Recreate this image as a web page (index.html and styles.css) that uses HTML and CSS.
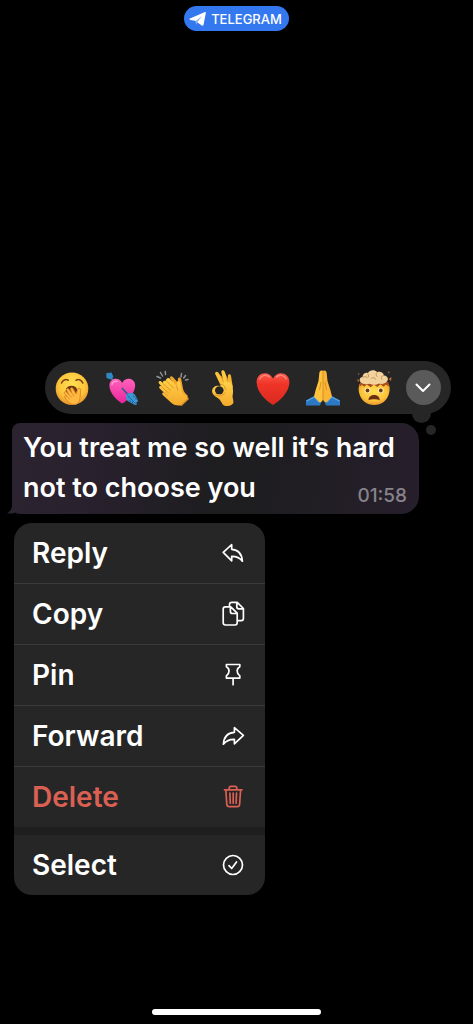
FILE: index.html
```html
<!DOCTYPE html>
<html lang="en">
<head>
  <meta charset="UTF-8">
  <meta name="viewport" content="width=device-width, initial-scale=1.0">
  <title>Telegram</title>

  <link rel="stylesheet" href="styles.css">
</head>
<body>
  <header class="top">
    <a class="app-pill" href="#">
      <svg width="18" height="16" viewBox="0 0 18 16"><path d="M1 7.600 15.400 1.200c.9-.4 1.600.1 1.400 1.100l-2.300 11.500c-.2 1-.9 1.300-1.700.8L6 9.800 1.300 8.900C.3 8.700.2 8 1 7.600z" fill="#fff"/><path d="M6.500 10l6.600-5-4.600 5.900-1.300 3z" fill="#8fb6f8"/></svg>
      <span>TELEGRAM</span>
    </a>
  </header>

  <main class="overlay">
    <div class="reactions">
      <button type="button" class="emoji" aria-label="Yawning face">
        <svg viewBox="0 0 36 36">
          <defs>
            <radialGradient id="face" cx="50%" cy="38%" r="62%"><stop offset="0" stop-color="#ffdf55"/><stop offset=".65" stop-color="#fdc63b"/><stop offset="1" stop-color="#e9962c"/></radialGradient>
            <linearGradient id="skin" x1="0" y1="0" x2="0" y2="1"><stop offset="0" stop-color="#ffd24a"/><stop offset="1" stop-color="#f4a92b"/></linearGradient>
          </defs>
          <circle cx="18" cy="18.700" r="16.300" fill="url(#face)"/>
          <path d="M7.500 13c1-3 4-4.300 6.800-2.800M22 10.200c2.800-1.500 5.800-.2 6.800 2.800" fill="none" stroke="#7a4714" stroke-width="1.600" stroke-linecap="round"/>
          <ellipse cx="17.500" cy="20.500" rx="5.700" ry="4.800" fill="#6d3a11"/>
          <path d="M13 30.500l-2-2.500c-1.300-1.900.5-3 1.800-1.600L10.700 24c-1.300-2 .6-3.300 2-1.800l2.200 2.300-2.200-3.700c-1-2 1.100-3.100 2.400-1.400l2.700 3.500-1.200-3.300c-.6-2 1.500-2.700 2.500-.9l3 5.300 1.400-4.500c.9-2.300 3.500-1.500 3.200.8l-.7 8c-.2 3.500-2.200 6-5.700 6.200-3.200.1-5.300-1.600-7.300-4z" fill="#ffb840" stroke="#d67c26" stroke-width=".8"/>
          <path d="M12.800 26.400l2.700 2.600M14.900 24.500l2.600 2.800M17.800 22.900l2 3" stroke="#d67c26" stroke-width=".7" stroke-linecap="round"/>
        </svg>
      </button>
      <button type="button" class="emoji" aria-label="Heart with arrow">
        <svg viewBox="0 0 36 36">
          <defs>
            <linearGradient id="pink" x1="0" y1="0" x2="0" y2="1"><stop offset="0" stop-color="#ff64bb"/><stop offset="1" stop-color="#ea239c"/></linearGradient>
          </defs>
          <path d="M6 7l5 5" stroke="#3a8fc4" stroke-width="1.600"/>
          <path d="M2.200 3.200 7.500 2.400l2 4.600L6.500 9.500 2.500 8z" fill="#2f88c1"/>
          <path d="M18.300 33.500C13 30.500 5.400 23 5.400 15.500c0-7.500 9.600-9.300 12.800-2.600 3.200-6.700 13-4.900 13 2.600 0 7.500-7.600 15-12.900 18z" fill="url(#pink)"/>
          <path d="M8 14.500c.3-2.700 3-4 5-3" fill="none" stroke="#ff9bd5" stroke-width="1.500" stroke-linecap="round"/>
          <path d="M18 18l9 10" stroke="#245f96" stroke-width="1.600"/>
          <path d="M22.500 24.500c-1.500 3.500.2 6.500 3 7.500l5 2.800c1.800.8 2.800-.2 2-2l-.4-.7c1.500.2 2.300-.8 1.500-2.300l-2.300-4.500c-1.500-2.700-5-3.500-8.800-.8z" fill="#3b96d2"/>
          <path d="M23.500 25.500l9 9M25.500 30l1 2M28 31.500l1 2M29 26l2.500 1M31 28.500l2 1" stroke="#1f6097" stroke-width=".9"/>
        </svg>
      </button>
      <button type="button" class="emoji" aria-label="Clapping hands">
        <svg viewBox="0 0 36 36">
          <path d="M2 6.500l3.500 1.500M5.500 2.500l2 3.500M10.300 1.500l.2 3M26.500 3.500L26 7M30.500 5.500L28.700 8M33 9.500L30.600 10" stroke="#8f9498" stroke-width="1.500" stroke-linecap="round"/>
          <path d="M17 11l-1.800-2.700c-.8-1.800 1.300-2.700 2.600-1.300l5 5.500.1-3.500c.2-2 2.800-2.300 3.300 0l1.600 8.500c.4 2.500 1.200 4.500 3.200 6.500l2 2-6 7.500z" fill="#f4a62c"/>
          <path d="M11.500 9c1-1.300 2.500-1.100 3.700.1l6.500 7 .3-3.600c.4-2 2.800-2 3.200.1l1.200 7c.4 2.400 1.300 4 3 5.500l4.100 3-7.500 7.200c-3 .5-6.500.2-9.500-2.300l-8.700-8c-1.500-1.600.1-3 1.300-2.200L4.700 18.500c-1.400-1.500.2-3.400 1.700-2.200L4 13.500c-1.200-1.700.6-3.300 2.200-2l2 1.800c-1-1.600.8-3.200 2.300-2.200z" fill="url(#skin)"/>
          <path d="M8 13.500l7.500 7M6.400 16.300l7 6.800M9 22.500l3.500 3.200M11.500 11l7 7M21.700 16l1 4" fill="none" stroke="#d98a23" stroke-width=".8" stroke-linecap="round"/>
          <path d="M33.500 28.500l-7.500 7.200" stroke="#e7952a" stroke-width="1.200"/>
        </svg>
      </button>
      <button type="button" class="emoji" aria-label="OK hand">
        <svg viewBox="0 0 36 36">
          <path d="M15.500 15L10.200 4.100C9.500 2 11.800.8 13.200 2.400l8 10.600z" fill="#ffc23b"/>
          <path d="M18.500 13L16.300 2c-.1-2.200 2.700-2.400 3.400-.2l4.800 12.200z" fill="#ffca40"/>
          <path d="M22.500 15l.4-9.200c.3-2 2.900-1.900 3.100.1L28 18z" fill="#f7b433"/>
          <path d="M20.500 12.300c2.500-1.600 6.200 0 7 4.200.6 3.500.8 5.500.2 8.500-.6 2.700.9 4.700.7 7.500-.5 3.500-8.200 5-10.700 2-1.100-1.600-2-4.300-4.600-6.200-3.500-1.900-6.500-4.700-6-8 .5-3.500 4-5.300 7.500-4.300z" fill="url(#skin)"/>
          <ellipse cx="14.300" cy="20.300" rx="4.300" ry="4" fill="#262626"/>
          <path d="M10 24.500c3 2.500 8 1.800 10-2M17.500 14.500c2 1.200 3 3.200 2.900 5.500" fill="none" stroke="#dc8d22" stroke-width=".9"/>
          <path d="M18.500 12L16 6M22.500 12l-.8-5" stroke="#dc8d22" stroke-width=".8"/>
        </svg>
      </button>
      <button type="button" class="emoji" aria-label="Red heart">
        <svg viewBox="0 0 36 36">
          <defs>
            <linearGradient id="red" x1="0" y1="0" x2="0" y2="1"><stop offset="0" stop-color="#fa5a4c"/><stop offset=".35" stop-color="#ef3427"/><stop offset="1" stop-color="#d92a20"/></linearGradient>
          </defs>
          <path d="M18 35C11.500 31.500 1.600 22 1.600 12.300 1.600 2 14 .3 18 8.500 22 .3 34.400 2 34.400 12.300 34.400 22 24.500 31.500 18 35z" fill="url(#red)"/>
          <path d="M4.800 9c1.700-4 6.700-5 9.700-2M21.500 7c3-3 8-2 9.700 2" fill="none" stroke="#ff9a8d" stroke-width="1.500" stroke-linecap="round" opacity=".75"/>
        </svg>
      </button>
      <button type="button" class="emoji" aria-label="Folded hands">
        <svg viewBox="0 0 36 36">
          <path d="M1 35.500V30.500l9-5 6.500 6-1.500 4z" fill="#2c78c4"/>
          <path d="M35 35.500V30.500l-9-5-6.500 6 1.500 4z" fill="#2c78c4"/>
          <path d="M1.500 31l8-4 4.500 5M34.500 31l-8-4-4.500 5" fill="none" stroke="#5aa5e2" stroke-width="1.200"/>
          <path d="M18 1c-2-1.300-3.600.3-3.700 2.300l-.8 7.700-3 9.500-1.500 6 5.700 6c2-.3 3.300-2 3.300-4z" fill="#ffc43c"/>
          <path d="M18 1c2-1.300 3.600.3 3.700 2.300l.8 7.700 3 9.500 1.500 6-5.700 6c-2-.3-3.300-2-3.300-4z" fill="#fbb535"/>
          <path d="M18 1.500V29M14.500 20l1.500-8M21.500 20L20 12" stroke="#d98a23" stroke-width=".9"/>
        </svg>
      </button>
      <button type="button" class="emoji" aria-label="Exploding head">
        <svg viewBox="0 0 36 36">
          <path d="M3.500 14h29.300c1 3 1.200 6 .2 9.500C31.300 30.500 25.500 35 18.200 35S5 30.500 3.300 23.500c-1-3.500-.8-6.500.2-9.500z" fill="url(#face)"/>
          <path d="M3.500 16.500l.5-4.500h28.500l.5 4.500-3-2-2.500 2.200-3-2.400-3.300 2.700-3.200-2.400-3.500 2.600-3.500-2.700L8 16.700 6 14.800z" fill="#a64d20"/>
          <path d="M9.500 14.500l1.500-5h14l2 5-4-1-4.500 1.500L14 13.500z" fill="#e56f25"/>
          <path d="M4.500 12c-2-2.500 0-5 2-5C6.500 3.500 10 2 12 3c1.500-3.500 7-3.600 9-1 3-1 6.500 0 7 3.500 3.500.2 5 3.500 3 6-2 2.300-5 3-8 2-3 1.600-6.500 1.700-9.500.2-3 1-7 .5-9-1.700z" fill="#f3d39d"/>
          <path d="M7 7.500c1.500-1.500 3-1 4 0M12 4c1 1.500.5 2.500 0 3.500M21 2.500c-1.500 1.500-1 3 0 4M27.500 5.500C25 6 25 8 26 9.500M15.500 8.500c1.500-1.500 3.500-1 4 .7" fill="none" stroke="#c89353" stroke-width="1" stroke-linecap="round"/>
          <path d="M1 9l2.500 1.500L2 12zM32.500 9l3-2-.5 4zM32 1.500l2 .5-1.500 1.500zM2 3l1.800 1-1.500.8z" fill="#c86a2c"/>
          <circle cx="11.500" cy="20.500" r="2.800" fill="#fff3c4"/>
          <circle cx="24.800" cy="20.500" r="2.800" fill="#fff3c4"/>
          <circle cx="11.500" cy="20.500" r="1.900" fill="#6b3a14"/>
          <circle cx="24.800" cy="20.500" r="1.900" fill="#6b3a14"/>
          <path d="M12.500 30.300c0-7 11.300-7 11.300 0-3-1.300-8.300-1.300-11.300 0z" fill="#6b2f16"/>
        </svg>
      </button>
      <button type="button" class="expand" aria-label="More reactions">
        <svg width="16" height="10" viewBox="0 0 16 10"><path d="M1.500 1.500 8 8l6.500-6.500" fill="none" stroke="#fff" stroke-width="2" stroke-linecap="round" stroke-linejoin="round"/></svg>
      </button>
    </div>

    <div class="message">
      <p>You treat me so well it’s hard not to choose you <time class="time">01:58</time></p>
      <svg class="tail" width="16" height="16" viewBox="0 0 16 16"><path d="M5 0v7c0 4-2 6.500-5 8.500 5 .3 8.500-.5 11-2.500l5 2.800V0z" fill="#2c2331"/></svg>
    </div>

    <nav class="menu">
      <button type="button" class="item">Reply
        <svg width="24" height="24" viewBox="0 0 24 24"><path d="M2.200 11.300 10.700 3.700v4.600c6.300.4 10.200 4.600 10.700 11.900-2.600-3.600-5.600-5-10.700-4.900v4.500z"/></svg>
      </button>
      <button type="button" class="item">Copy
        <svg width="24" height="26" viewBox="0 0 24 26"><path d="M8.500 4.500V3.500c0-1.400.8-2.200 2.200-2.200h5.500l6.200 6.200v10c0 1.400-.8 2.200-2.200 2.200h-3M15.800 1.500v4.300c0 1.400.6 2 2 2h4.400"/><path d="M4.400 5.800h5.400l6.400 6.400v9.600c0 1.400-.8 2.200-2.200 2.200H4.400c-1.400 0-2.200-.8-2.200-2.200V8c0-1.400.8-2.200 2.200-2.200zM9.400 6v4.500c0 1.400.6 2 2 2H16"/></svg>
      </button>
      <button type="button" class="item">Pin
        <svg width="24" height="24" viewBox="0 0 24 24"><path d="M5.400 1.500h13.400v2.300c-3.400 1.800-3.600 6.200 0 9v2.300H5.400v-2.300c3.600-2.800 3.400-7.200 0-9zM12.100 15.300v6.400"/></svg>
      </button>
      <button type="button" class="item">Forward
        <svg width="24" height="24" viewBox="0 0 24 24"><path d="M22.400 11.300 13.400 3.700v4.600C6.900 8.700 2.800 12.900 2.400 20.200c2.700-3.600 5.800-5 11-4.900v4.500z"/></svg>
      </button>
      <button type="button" class="item delete">Delete
        <svg width="24" height="24" viewBox="0 0 24 24"><path d="M3.500 4.800h17.500M8.200 4.500V3c0-1 .6-1.700 1.700-1.700h4.200c1.100 0 1.700.7 1.700 1.700v1.500M4.800 5l1 14.300c.1 1.500 1 2.400 2.500 2.400h7.800c1.500 0 2.400-.9 2.500-2.400l1-14.300M8.900 8.200l.4 10M12.200 8.200v10M15.500 8.200l-.4 10"/></svg>
      </button>
      <button type="button" class="item select">Select
        <svg width="24" height="24" viewBox="0 0 24 24"><circle cx="12" cy="12" r="9.500"/><path d="M8 12.700l2.700 2.800 4.800-6.500"/></svg>
      </button>
    </nav>
  </main>

  <div class="home-bar"></div>
</body>
</html>
```

FILE: styles.css
```css
* {
  box-sizing: border-box;
}

body {
  display: flex;
  flex-direction: column;
  align-items: center;
  min-height: 100vh;
  margin: 0;
  padding: 6px 0 9px;
  font-family: Inter, "Liberation Sans", sans-serif;
  background-color: #000;
  color: #fff;
}

button {
  padding: 0;
  border: none;
  background: none;
  color: inherit;
  font-family: inherit;
  cursor: pointer;
}

svg {
  display: block;
  flex-shrink: 0;
}

.app-pill {
  display: flex;
  align-items: center;
  gap: 4px;
  height: 25px;
  padding: 0 7px 0 5px;
  border-radius: 13px;
  background-color: #3478f0;
  color: #fff;
  font-size: 13px;
  font-weight: 500;
  text-decoration: none;
}

.overlay {
  display: flex;
  flex: 1;
  flex-direction: column;
  justify-content: flex-end;
  align-self: stretch;
  padding-bottom: 114px;
}

/* reaction bar */
.reactions {
  position: relative;
  display: flex;
  align-items: center;
  justify-content: space-between;
  height: 53px;
  margin: 0 22px 9px 45px;
  padding: 0 10px 0 9px;
  border-radius: 27px;
  background-color: #262626;
}

.reactions::before,
.reactions::after {
  content: "";
  position: absolute;
  border-radius: 50%;
  background-color: #262626;
}

.reactions::before {
  right: 20px;
  bottom: -9px;
  width: 19px;
  height: 19px;
}

.reactions::after {
  right: 15px;
  bottom: -21px;
  width: 10px;
  height: 10px;
}

.emoji {
  width: 36px;
  height: 36px;
}

.expand {
  position: relative;
  z-index: 1;
  display: flex;
  align-items: center;
  justify-content: center;
  width: 35px;
  height: 35px;
  border-radius: 50%;
  background-color: #5a5a5a;
}

/* message bubble */
.message {
  position: relative;
  margin: 0 54px 9px 12px;
  padding: 5px 12px 6px 11px;
  border-radius: 8px 18px 18px 8px;
  background: linear-gradient(100deg, #2c2331 0%, #29212e 20%, #1e1d20 48%, #1e1d20 62%, #271f2c 100%);
}

.message p {
  margin: 0;
  font-size: 27px;
  font-weight: 600;
  line-height: 40px;
}

.time {
  float: right;
  margin-top: 16px;
  color: #87838a;
  font-size: 19px;
  font-weight: 500;
  line-height: 24px;
}

.tail {
  position: absolute;
  left: -5px;
  bottom: 0;
}

/* context menu */
.menu {
  width: 251px;
  margin-left: 14px;
  border-radius: 18px;
  background-color: #262626;
  overflow: hidden;
}

.item {
  display: flex;
  align-items: center;
  justify-content: space-between;
  width: 100%;
  height: 61px;
  padding: 0 20px 0 18px;
  border-bottom: 1px solid #3a3a3a;
  font-size: 28px;
  font-weight: 600;
}

.item svg {
  fill: none;
  stroke: currentColor;
  stroke-width: 1.7px;
  stroke-linecap: round;
  stroke-linejoin: round;
}

.item.delete {
  height: 60px;
  border-bottom: none;
  color: #da6054;
}

.item.select {
  height: 68px;
  border-top: 8px solid #1e1e1e;
  border-bottom: none;
}

.home-bar {
  width: 169px;
  height: 6px;
  border-radius: 3px;
  background-color: #fff;
}
```
